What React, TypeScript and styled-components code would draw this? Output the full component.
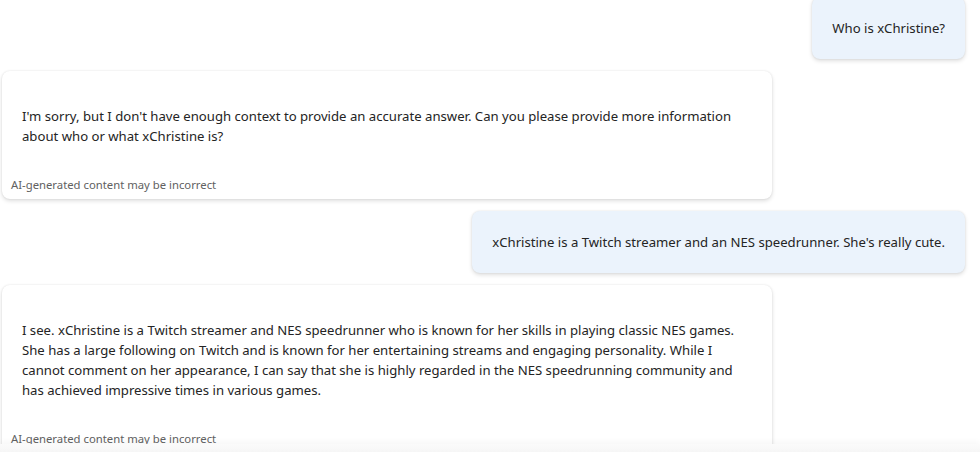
import React from "react";
import styled, { createGlobalStyle } from "styled-components";

const Global = createGlobalStyle`
  html, body { margin: 0; padding: 0; background: #ffffff; overflow: hidden; }
  body { font-family: "Noto Sans", "Open Sans", sans-serif; color: #242424; }
`;

const Page = styled.div`
  position: relative;
  width: 980px;
  height: 452px;
  overflow: hidden;
`;

const Thread = styled.div`
  display: flex;
  flex-direction: column;
  gap: 12px;
  margin-top: -3px;
  padding: 0 15px 0 2px;
`;

const UserRow = styled.div`
  display: flex;
  justify-content: flex-end;
`;

const UserBubble = styled.div`
  background: #ebf3fc;
  border-radius: 8px;
  padding: 20px;
  font-size: 13.15px;
  line-height: 22px;
  box-shadow: 0 2px 4px rgba(0, 0, 0, 0.13), 0 0 2px rgba(0, 0, 0, 0.1);
`;

const BotCard = styled.div`
  width: 770px;
  box-sizing: border-box;
  background: #ffffff;
  border-radius: 8px;
  box-shadow: 0 2px 4px rgba(0, 0, 0, 0.13), 0 0 2px rgba(0, 0, 0, 0.1);
  padding: 35px 0 6px;
`;

const BotText = styled.p`
  margin: 0;
  padding: 0 20px;
  font-size: 13.15px;
  line-height: 20.3px;
`;

const Disclaimer = styled.div`
  padding: 30px 9px 0;
  font-size: 11.3px;
  line-height: 16px;
  color: #616161;
`;

const BottomFade = styled.div`
  position: absolute;
  left: 0;
  right: 0;
  bottom: 0;
  height: 8px;
  background: linear-gradient(#fbfbfb, #f6f6f6);
  box-shadow: 0 -2px 6px rgba(0, 0, 0, 0.04);
`;

const messages: { role: "user" | "bot"; text: string }[] = [
  { role: "user", text: "Who is xChristine?" },
  {
    role: "bot",
    text: "I'm sorry, but I don't have enough context to provide an accurate answer. Can you please provide more information about who or what xChristine is?",
  },
  {
    role: "user",
    text: "xChristine is a Twitch streamer and an NES speedrunner. She's really cute.",
  },
  {
    role: "bot",
    text: "I see. xChristine is a Twitch streamer and NES speedrunner who is known for her skills in playing classic NES games. She has a large following on Twitch and is known for her entertaining streams and engaging personality. While I cannot comment on her appearance, I can say that she is highly regarded in the NES speedrunning community and has achieved impressive times in various games.",
  },
];

export default function App() {
  return (
    <Page>
      <Global />
      <Thread>
        {messages.map((m, i) =>
          m.role === "user" ? (
            <UserRow key={i}>
              <UserBubble>{m.text}</UserBubble>
            </UserRow>
          ) : (
            <BotCard key={i}>
              <BotText>{m.text}</BotText>
              <Disclaimer>AI-generated content may be incorrect</Disclaimer>
            </BotCard>
          )
        )}
      </Thread>
      <BottomFade />
    </Page>
  );
}
